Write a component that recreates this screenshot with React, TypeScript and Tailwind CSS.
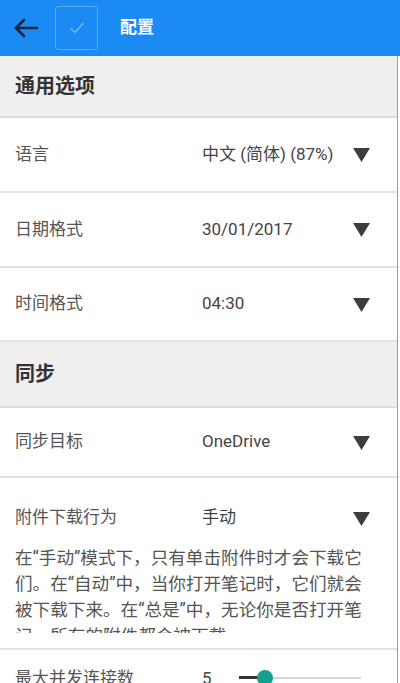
import React from "react";

const font = { fontFamily: "Roboto, 'Noto Sans CJK SC', sans-serif" };

function Tri() {
  return (
    <svg width="17" height="15" viewBox="0 0 17 15" className="shrink-0">
      <polygon points="0,1 17,1 8.5,15" fill="#3d3d3d" />
    </svg>
  );
}

function Row({ label, value, h }: { label: string; value: string; h: string }) {
  return (
    <div className={`flex items-center shrink-0 border-b-2 border-[#e2e2e2] ${h}`}>
      <div className="w-[202px] pl-[15px] text-[17px] text-[#555]">{label}</div>
      <div className="flex-1 text-[17px] text-[#444]">{value}</div>
      <div className="pr-[27px] flex items-center">
        <Tri />
      </div>
    </div>
  );
}

function Section({ title, h }: { title: string; h: string }) {
  return (
    <div className={`flex items-center shrink-0 bg-[#efefef] border-b-2 border-[#dcdcdc] pl-[15px] ${h}`}>
      <span className="text-[20px] font-bold text-[#333]">{title}</span>
    </div>
  );
}

export default function App() {
  return (
    <div className="w-[400px] h-[683px] overflow-hidden bg-white flex flex-col" style={font}>
      <div className="h-[56px] bg-[#1b8af3] flex items-center shrink-0">
        <div className="w-[55px] flex items-center pl-[13px]">
          <svg width="26" height="24" viewBox="0 0 26 24" fill="none" stroke="#1b2540" strokeWidth="2.6" strokeLinecap="round" strokeLinejoin="round">
            <path d="M24 12H3" />
            <path d="M11 4l-8 8 8 8" />
          </svg>
        </div>
        <div className="w-[43px] h-[44px] rounded-[3px] border border-[#5daaf7] flex items-center justify-center">
          <svg width="16" height="12" viewBox="0 0 16 12" fill="none" stroke="#6cb6fb" strokeWidth="1.6" strokeLinecap="round" strokeLinejoin="round">
            <path d="M2 6.5l4 4 8-9" />
          </svg>
        </div>
        <div className="ml-[22px] text-[17px] font-bold text-white">配置</div>
      </div>
      <div className="flex flex-1 min-h-0">
        <div className="flex-1 flex flex-col min-w-0">
          <Section title="通用选项" h="h-[62px]" />
          <Row label="语言" value="中文 (简体) (87%)" h="h-[75px]" />
          <Row label="日期格式" value="30/01/2017" h="h-[75px]" />
          <Row label="时间格式" value="04:30" h="h-[74px]" />
          <Section title="同步" h="h-[66px]" />
          <Row label="同步目标" value="OneDrive" h="h-[70px]" />
          <div className="border-b-2 border-[#e2e2e2] h-[172px] flex flex-col shrink-0">
            <div className="flex items-center pt-[26px] h-[54px] shrink-0">
              <div className="w-[202px] pl-[15px] text-[17px] text-[#555]">附件下载行为</div>
              <div className="flex-1 text-[17px] text-[#444]">手动</div>
              <div className="pr-[27px] flex items-center">
                <Tri />
              </div>
            </div>
            <div className="mt-[13px] h-[88px] shrink-0 overflow-hidden pl-[15px] pr-[10px] text-[17.6px] leading-[26px] text-[#555] whitespace-nowrap">
              在“手动”模式下，只有单击附件时才会下载它
              <br />
              们。在“自动”中，当你打开笔记时，它们就会
              <br />
              被下载下来。在“总是”中，无论你是否打开笔
              <br />
              记，所有的附件都会被下载。
            </div>
          </div>
          <div className="flex items-start h-[60px] shrink-0">
            <div className="w-[202px] pl-[15px] text-[17px] text-[#555] pt-[16px]">最大并发连接数</div>
            <div className="w-[37px] text-[17px] text-[#444] pt-[16px]">5</div>
            <div className="relative w-[122px] h-[40px] mt-[8px]">
              <div className="absolute left-0 right-0 top-[19px] h-[2px] bg-[#d6d6d6]" />
              <div className="absolute left-0 w-[26px] top-[18px] h-[3px] bg-[#333]" />
              <div className="absolute left-[18px] top-[12px] w-[16px] h-[16px] rounded-full bg-[#15a08d]" />
            </div>
          </div>
        </div>
        <div className="w-[1px] bg-[#9c9aa8]" />
        <div className="w-[2px] bg-white" />
      </div>
    </div>
  );
}
